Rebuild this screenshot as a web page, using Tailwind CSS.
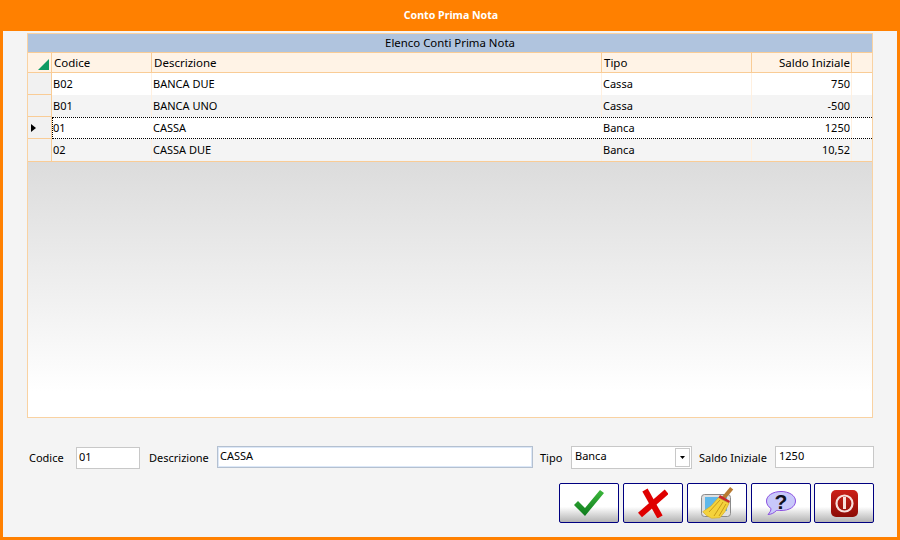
<!DOCTYPE html>
<html lang="it">
<head>
<meta charset="utf-8">
<title>Conto Prima Nota</title>
<script src="https://cdn.jsdelivr.net/npm/@tailwindcss/browser@4"></script>
</head>
<body class="m-0 overflow-hidden">
<div class="w-[900px] h-[540px] flex flex-col bg-[#ff8000] font-['Noto_Sans',sans-serif] text-[11px] leading-none text-black">
  <div class="h-[31px] shrink-0 flex items-center justify-center pl-[2px] pb-[1px] text-white font-bold text-[10.6px]">Conto Prima Nota</div>
  <div class="flex-1 mx-[3px] mb-[3px] bg-[#f4f4f4] px-[24px] pt-[2px] flex flex-col">
    <!-- Griglia -->
    <div class="w-[846px] h-[385px] border border-[#f9d2a2] flex flex-col">
      <div class="h-[19px] shrink-0 bg-[#b0c4de] border-b border-[#f9cc96] flex items-center justify-center pb-[1px] text-[11.4px]">Elenco Conti Prima Nota</div>
      <div class="h-[20px] shrink-0 grid grid-cols-[24px_100px_450px_150px_100px_20px] bg-[#fff3e6] border-b border-[#f9cc96] text-[11.5px]">
        <div class="border-r border-[#f9cc96] flex items-end justify-end pr-[2px] pb-[2px]">
          <svg width="12" height="12" viewBox="0 0 12 12"><polygon points="12,1 12,12 1,12" fill="#0f9b63"/></svg>
        </div>
        <div class="border-r border-[#f9cc96] pl-[2px] flex items-center">Codice</div>
        <div class="border-r border-[#f9cc96] pl-[2px] flex items-center">Descrizione</div>
        <div class="border-r border-[#f9cc96] pl-[2px] flex items-center">Tipo</div>
        <div class="border-r border-[#f9cc96] pr-[1px] flex items-center justify-end">Saldo Iniziale</div>
        <div></div>
      </div>
      <div class="h-[22px] shrink-0 grid grid-cols-[24px_100px_450px_150px_100px_20px] bg-white">
        <div class="bg-[#f1f1f1] border-r border-b border-[#f9cc96]"></div>
        <div class="border-r border-[#fff0e0] pl-[1px] pb-[2px] flex items-center">B02</div>
        <div class="border-r border-[#fff0e0] pl-[1px] pb-[2px] flex items-center">BANCA DUE</div>
        <div class="border-r border-[#fff0e0] pl-[1px] pb-[2px] flex items-center">Cassa</div>
        <div class="border-r border-[#fff0e0] pr-[1px] pb-[2px] flex items-center justify-end">750</div>
        <div></div>
      </div>
      <div class="h-[22px] shrink-0 grid grid-cols-[24px_100px_450px_150px_100px_20px] bg-[#f4f4f4]">
        <div class="bg-[#f1f1f1] border-r border-b border-[#f9cc96]"></div>
        <div class="border-r border-[#fff0e0] pl-[1px] pb-[2px] flex items-center">B01</div>
        <div class="border-r border-[#fff0e0] pl-[1px] pb-[2px] flex items-center">BANCA UNO</div>
        <div class="border-r border-[#fff0e0] pl-[1px] pb-[2px] flex items-center">Cassa</div>
        <div class="border-r border-[#fff0e0] pr-[1px] pb-[2px] flex items-center justify-end">-500</div>
        <div></div>
      </div>
      <div class="h-[22px] shrink-0 grid grid-cols-[24px_1fr] bg-white">
        <div class="bg-[#f1f1f1] border-r border-b border-[#f9cc96] flex items-center pl-[3px]">
          <svg width="6" height="8" viewBox="0 0 6 8"><polygon points="0,0 5,4 0,8" fill="#000"/></svg>
        </div>
        <div class="grid grid-cols-[99px_450px_150px_100px_20px] border-t border-b border-l border-dotted border-black">
          <div class="pb-[2px] flex items-center">01</div>
          <div class="pl-[1px] pb-[2px] flex items-center">CASSA</div>
          <div class="pl-[1px] pb-[2px] flex items-center">Banca</div>
          <div class="border-r border-[#fff0e0] pr-[1px] pb-[2px] flex items-center justify-end">1250</div>
          <div></div>
        </div>
      </div>
      <div class="h-[23px] shrink-0 grid grid-cols-[24px_100px_450px_150px_100px_20px] bg-[#f4f4f4] border-b border-[#f9cc96]">
        <div class="bg-[#f1f1f1] border-r border-[#f9cc96]"></div>
        <div class="border-r border-[#fff0e0] pl-[1px] pb-[1px] flex items-center">02</div>
        <div class="border-r border-[#fff0e0] pl-[1px] pb-[1px] flex items-center">CASSA DUE</div>
        <div class="border-r border-[#fff0e0] pl-[1px] pb-[1px] flex items-center">Banca</div>
        <div class="border-r border-[#fff0e0] pr-[1px] pb-[1px] flex items-center justify-end">10,52</div>
        <div></div>
      </div>
      <div class="flex-1 bg-gradient-to-b from-[#dcdcdc] to-white to-90%"></div>
    </div>

    <!-- Campi -->
    <div class="flex items-start mt-[28px] h-[23px] w-[847px]">
      <span class="ml-[2px] w-[47px] pt-[6px]">Codice</span>
      <div class="w-[64px] h-[22px] border border-[#c8c8c8] bg-white pl-[2px] pt-[3px] mt-[1px]">01</div>
      <span class="ml-[9px] w-[68px] pt-[6px]">Descrizione</span>
      <div class="w-[316px] h-[22px] border border-[#b4c0d0] bg-white shadow-[inset_0_0_0_1px_#dce8f8] pl-[2px] pt-[3px]">CASSA</div>
      <span class="ml-[7px] w-[31px] pt-[6px]">Tipo</span>
      <div class="w-[121px] h-[23px] border border-[#c8c8c8] bg-white flex pl-[3px] pt-[3px] relative">Banca
        <div class="absolute right-[1px] top-[1px] w-[15px] h-[19px] border border-[#c8c8c8] flex items-center justify-center">
          <svg width="5" height="3" viewBox="0 0 5 3"><polygon points="0,0 5,0 2.5,3" fill="#000"/></svg>
        </div>
      </div>
      <span class="ml-[7px] w-[76px] pt-[6px]">Saldo Iniziale</span>
      <div class="w-[99px] h-[22px] border border-[#c8c8c8] bg-white pl-[3px] pt-[3px]">1250</div>
    </div>

    <!-- Pulsanti -->
    <div class="flex justify-end mt-[14px] gap-[4px] w-[847px]">
      <div class="w-[60px] h-[40px] rounded-[2px] border border-[#000080] bg-gradient-to-b from-white from-60% to-[#b4b4b4] flex items-center justify-center">
        <svg width="34" height="30" viewBox="0 0 34 30">
          <defs><linearGradient id="g" x1="0" y1="0" x2="0" y2="1"><stop offset="0" stop-color="#3cb83c"/><stop offset="1" stop-color="#0d7a1c"/></linearGradient></defs>
          <polygon points="2,17 6,13 13,20 28,2 32,5 13,28" fill="url(#g)"/>
        </svg>
      </div>
      <div class="w-[60px] h-[40px] rounded-[2px] border border-[#000080] bg-gradient-to-b from-white from-60% to-[#b4b4b4] flex items-center justify-center">
        <svg width="30" height="30" viewBox="0 0 30 30">
          <line x1="7" y1="2" x2="22" y2="29" stroke="#df0000" stroke-width="6"/>
          <line x1="28.7" y1="3.7" x2="2" y2="27" stroke="#df0000" stroke-width="6"/>
        </svg>
      </div>
      <div class="w-[60px] h-[40px] rounded-[2px] border border-[#000080] bg-gradient-to-b from-white from-60% to-[#b4b4b4] flex items-center justify-center">
        <svg width="34" height="34" viewBox="0 0 34 34">
          <rect x="1.5" y="8.5" width="29" height="22" rx="3" fill="#e0e0e0" stroke="#8a8a8a"/>
          <rect x="5" y="11" width="22" height="14" fill="#5fb8ea"/>
          <line x1="31.7" y1="2.3" x2="23.3" y2="12.3" stroke="#b87a30" stroke-width="4"/>
          <polygon points="18.3,11.7 20,9 30,15 29,17.3" fill="#c8282c"/>
          <polygon points="18.3,11.7 29,17.3 25,25.7 20,31.7 11.7,32.3 6.7,29.7 2.7,25.7 11,20" fill="#f4d23c" stroke="#d0a820" stroke-width=".6"/>
          <path d="M9 26 L20 14 M14 30 L23 16 M19 30 L26 18" stroke="#c89a18" stroke-width="1" fill="none"/>
        </svg>
      </div>
      <div class="w-[60px] h-[40px] rounded-[2px] border border-[#000080] bg-gradient-to-b from-white from-60% to-[#b4b4b4] flex items-center justify-center">
        <svg width="30" height="24" viewBox="0 0 30 24">
          <path d="M15 .5 C23 .5 29.5 4.5 29.5 10 C29.5 16 23 19.5 15 19.5 C13 19.5 12 19.5 10.5 19.5 C8 22 5 23.5 2 23.5 C4 21.5 5 19.5 5 17.5 C2 15.5 .5 13 .5 10 C.5 4.5 7 .5 15 .5 Z" fill="#c8c8fa" stroke="#8a50e0" stroke-width="1"/>
          <text x="15" y="18" text-anchor="middle" font-family="Liberation Sans, sans-serif" font-weight="700" font-size="21" fill="#101020">?</text>
        </svg>
      </div>
      <div class="w-[60px] h-[40px] rounded-[2px] border border-[#000080] bg-gradient-to-b from-white from-60% to-[#b4b4b4] flex items-center justify-center ml-[-1px]">
        <svg width="27" height="27" viewBox="0 0 27 27">
          <defs><linearGradient id="r" x1="0" y1="0" x2="0" y2="1"><stop offset="0" stop-color="#cc2018"/><stop offset="1" stop-color="#8c0c06"/></linearGradient></defs>
          <rect x="0" y="0" width="27" height="27" rx="5" fill="url(#r)"/>
          <circle cx="13.5" cy="13.5" r="8" fill="none" stroke="#f8e0dc" stroke-width="2.2"/>
          <rect x="12" y="7" width="3" height="12" fill="#f8e0dc"/>
        </svg>
      </div>
    </div>
  </div>
</div>
</body>
</html>
